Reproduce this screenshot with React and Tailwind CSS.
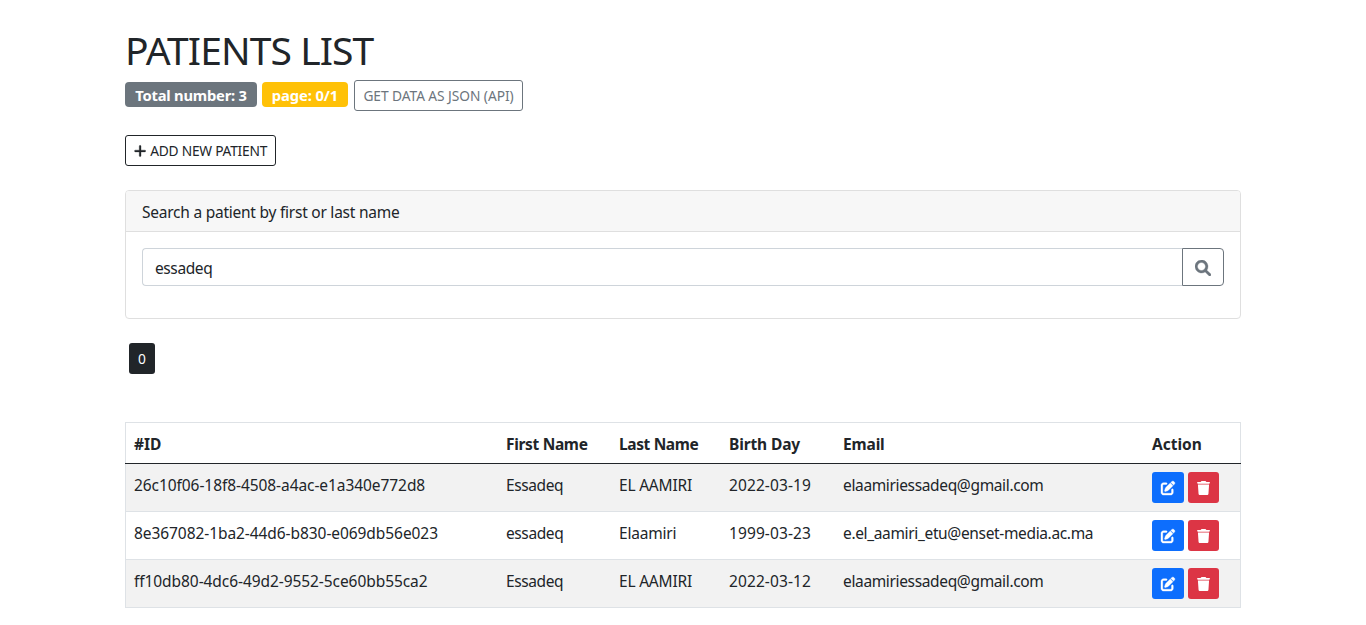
const patients = [
  { id: "26c10f06-18f8-4508-a4ac-e1a340e772d8", first: "Essadeq", last: "EL AAMIRI", birth: "2022-03-19", email: "elaamiriessadeq@gmail.com" },
  { id: "8e367082-1ba2-44d6-b830-e069db56e023", first: "essadeq", last: "Elaamiri", birth: "1999-03-23", email: "e.el_aamiri_etu@enset-media.ac.ma" },
  { id: "ff10db80-4dc6-49d2-9552-5ce60bb55ca2", first: "Essadeq", last: "EL AAMIRI", birth: "2022-03-12", email: "elaamiriessadeq@gmail.com" },
];

const columns = "grid grid-cols-[372px_113px_110px_114px_309px_1fr] pl-2";

function SearchIcon() {
  return (
    <svg viewBox="0 0 512 512" className="size-4 fill-current stroke-current" strokeWidth="10">
      <path d="M500.3 443.7l-119.7-119.7c27.22-40.41 40.65-90.9 33.46-144.7C401.8 87.79 326.8 13.32 235.2 1.723C99.01-15.51-15.51 99.01 1.724 235.2c11.6 91.64 86.08 166.7 177.6 178.9c53.8 7.189 104.3-6.236 144.7-33.46l119.7 119.7c15.62 15.62 40.95 15.62 56.57 0C515.9 484.7 515.9 459.3 500.3 443.7zM79.1 208c0-70.58 57.42-128 128-128s128 57.42 128 128c0 70.58-57.42 128-128 128S79.1 278.6 79.1 208z" />
    </svg>
  );
}

function EditIcon() {
  return (
    <svg viewBox="0 0 512 512" className="size-3.5 overflow-visible fill-current stroke-current" strokeWidth="14">
      <path d="M490.3 40.4C512.2 62.27 512.2 97.73 490.3 119.6L460.3 149.7L362.3 51.72L392.4 21.66C414.3-.2135 449.7-.2135 471.6 21.66L490.3 40.4zM172.4 241.7L339.7 74.34L437.7 172.3L270.3 339.6C264.2 345.8 256.7 350.4 248.4 353.2L159.6 382.8C150.1 385.6 141.5 383.4 135 376.1C128.6 370.5 126.4 361 129.2 352.4L158.8 263.6C161.6 255.3 166.2 247.8 172.4 241.7V241.7zM192 63.1C209.7 63.1 224 78.33 224 95.1C224 113.7 209.7 127.1 192 127.1H96C78.33 127.1 64 142.3 64 159.1V416C64 433.7 78.33 448 96 448H352C369.7 448 384 433.7 384 416V319.1C384 302.3 398.3 287.1 416 287.1C433.7 287.1 448 302.3 448 319.1V416C448 469 405 512 352 512H96C42.98 512 0 469 0 416V159.1C0 106.1 42.98 63.1 96 63.1H192z" />
    </svg>
  );
}

function TrashIcon() {
  return (
    <svg viewBox="0 0 448 512" className="h-3.5 w-[13px] fill-current" preserveAspectRatio="none">
      <path d="M135.2 17.69C140.6 6.848 151.7 0 163.8 0H284.2C296.3 0 307.4 6.848 312.8 17.69L320 32H416C433.7 32 448 46.33 448 64C448 81.67 433.7 96 416 96H32C14.33 96 0 81.67 0 64C0 46.33 14.33 32 32 32H128L135.2 17.69zM394.8 466.1C393.2 492.3 372.3 512 346.9 512H101.1C75.75 512 54.77 492.3 53.19 466.1L31.1 128H416L394.8 466.1z" />
    </svg>
  );
}

function PlusIcon() {
  return (
    <svg viewBox="0 0 448 512" className="h-3.5 w-[12.25px] fill-current stroke-current" strokeWidth="12">
      <path d="M432 256c0 17.69-14.33 32.01-32 32.01H256v144c0 17.69-14.33 31.99-32 31.99s-32-14.3-32-31.99v-144H48c-17.67 0-32-14.32-32-32.01s14.33-31.99 32-31.99H192v-144c0-17.69 14.33-32.01 32-32.01s32 14.32 32 32.01v144h144C417.7 224 432 238.3 432 256z" />
    </svg>
  );
}

function PatientRow({ patient }) {
  return (
    <div className={`${columns} h-12 border-b border-[#dee2e6] pt-2 text-[15.5px] odd:bg-[#f2f2f2]`}>
      <span className="mt-px tracking-[-0.07px]">{patient.id}</span>
      <span className="mt-px tracking-[-0.4px]">{patient.first}</span>
      <span className="mt-px tracking-[-0.2px]">{patient.last}</span>
      <span className="mt-px tracking-[0.1px]">{patient.birth}</span>
      <span className="mt-px tracking-[-0.35px]">{patient.email}</span>
      <div className="flex gap-1">
        <button className="flex h-[31px] w-8 items-center justify-center rounded-[3px] bg-[#0d6efd] text-white">
          <EditIcon />
        </button>
        <button className="flex h-[31px] w-[31px] items-center justify-center rounded-[3px] bg-[#dc3545] text-white">
          <TrashIcon />
        </button>
      </div>
    </div>
  );
}

export default function App() {
  return (
    <div className="min-h-[625px] bg-white font-['Noto_Sans',sans-serif] text-base leading-6 text-[#212529]">
      <main className="ml-[125px] w-[1116px] pt-[26px]">
        <h1 className="h-[54px] whitespace-nowrap text-[39px] leading-[48px] tracking-[-0.9px]">PATIENTS LIST</h1>
        <div className="flex items-start whitespace-nowrap">
          <span className="mt-0.5 flex h-[25px] w-[132px] items-center justify-center rounded bg-[#6c757d] text-[14.75px] font-bold tracking-[-0.22px] text-white">Total number: 3</span>
          <span className="ml-[5px] mt-0.5 flex h-[25px] w-[86px] items-center justify-center rounded bg-[#ffc107] text-[14.75px] font-bold tracking-[-0.1px] text-white">page: 0/1</span>
          <button className="ml-1.5 flex h-[31px] w-[169px] items-center justify-center rounded-[3px] border border-[#6c757d] text-[13.75px] tracking-[-0.06px] text-[#6c757d]">GET DATA AS JSON (API)</button>
        </div>
        <button className="mt-6 flex h-[31px] w-[151px] items-center gap-1 whitespace-nowrap rounded-[3px] border border-[#212529] pl-2 text-[13.75px]">
          <PlusIcon />
          <span className="tracking-[-0.24px]">ADD NEW PATIENT</span>
        </button>

        <section className="mt-6 h-[129px] rounded border border-[#dfdfdf]">
          <div className="h-[41px] rounded-t-[3px] border-b border-[#dfdfdf] bg-[#f7f7f7] px-4 pt-[9px] text-[15.5px] tracking-[-0.24px]">
            <span>Search a patient by first or last name</span>
          </div>
          <div className="flex px-4 pt-4">
            <input
              className="h-[38px] w-[1040px] rounded-l border border-r-0 border-[#ced4da] px-3 pt-px text-[15.5px] tracking-[-0.4px] outline-none"
              defaultValue="essadeq"
            />
            <button className="flex h-[38px] w-[42px] items-center justify-center rounded-r border border-[#6c757d] pt-0.5 text-[#6c757d]">
              <SearchIcon />
            </button>
          </div>
        </section>

        <button className="ml-1 mt-6 flex h-[31px] w-[26px] items-center justify-center rounded-[3px] bg-[#212529] text-[13.75px] text-white">0</button>

        <section className="mt-12 border-x border-t border-[#dee2e6]">
          <div className={`${columns} -mx-px h-[41px] border-b border-[#212529] pl-[9px] pt-[9px] text-[15.5px] font-bold`}>
            <span>#ID</span>
            <span className="tracking-[-0.33px]">First Name</span>
            <span className="tracking-[-0.37px]">Last Name</span>
            <span className="tracking-[-0.13px]">Birth Day</span>
            <span className="tracking-[-0.15px]">Email</span>
            <span>Action</span>
          </div>
          <div>
            {patients.map((patient) => (
              <PatientRow key={patient.id} patient={patient} />
            ))}
          </div>
        </section>
      </main>
    </div>
  );
}
